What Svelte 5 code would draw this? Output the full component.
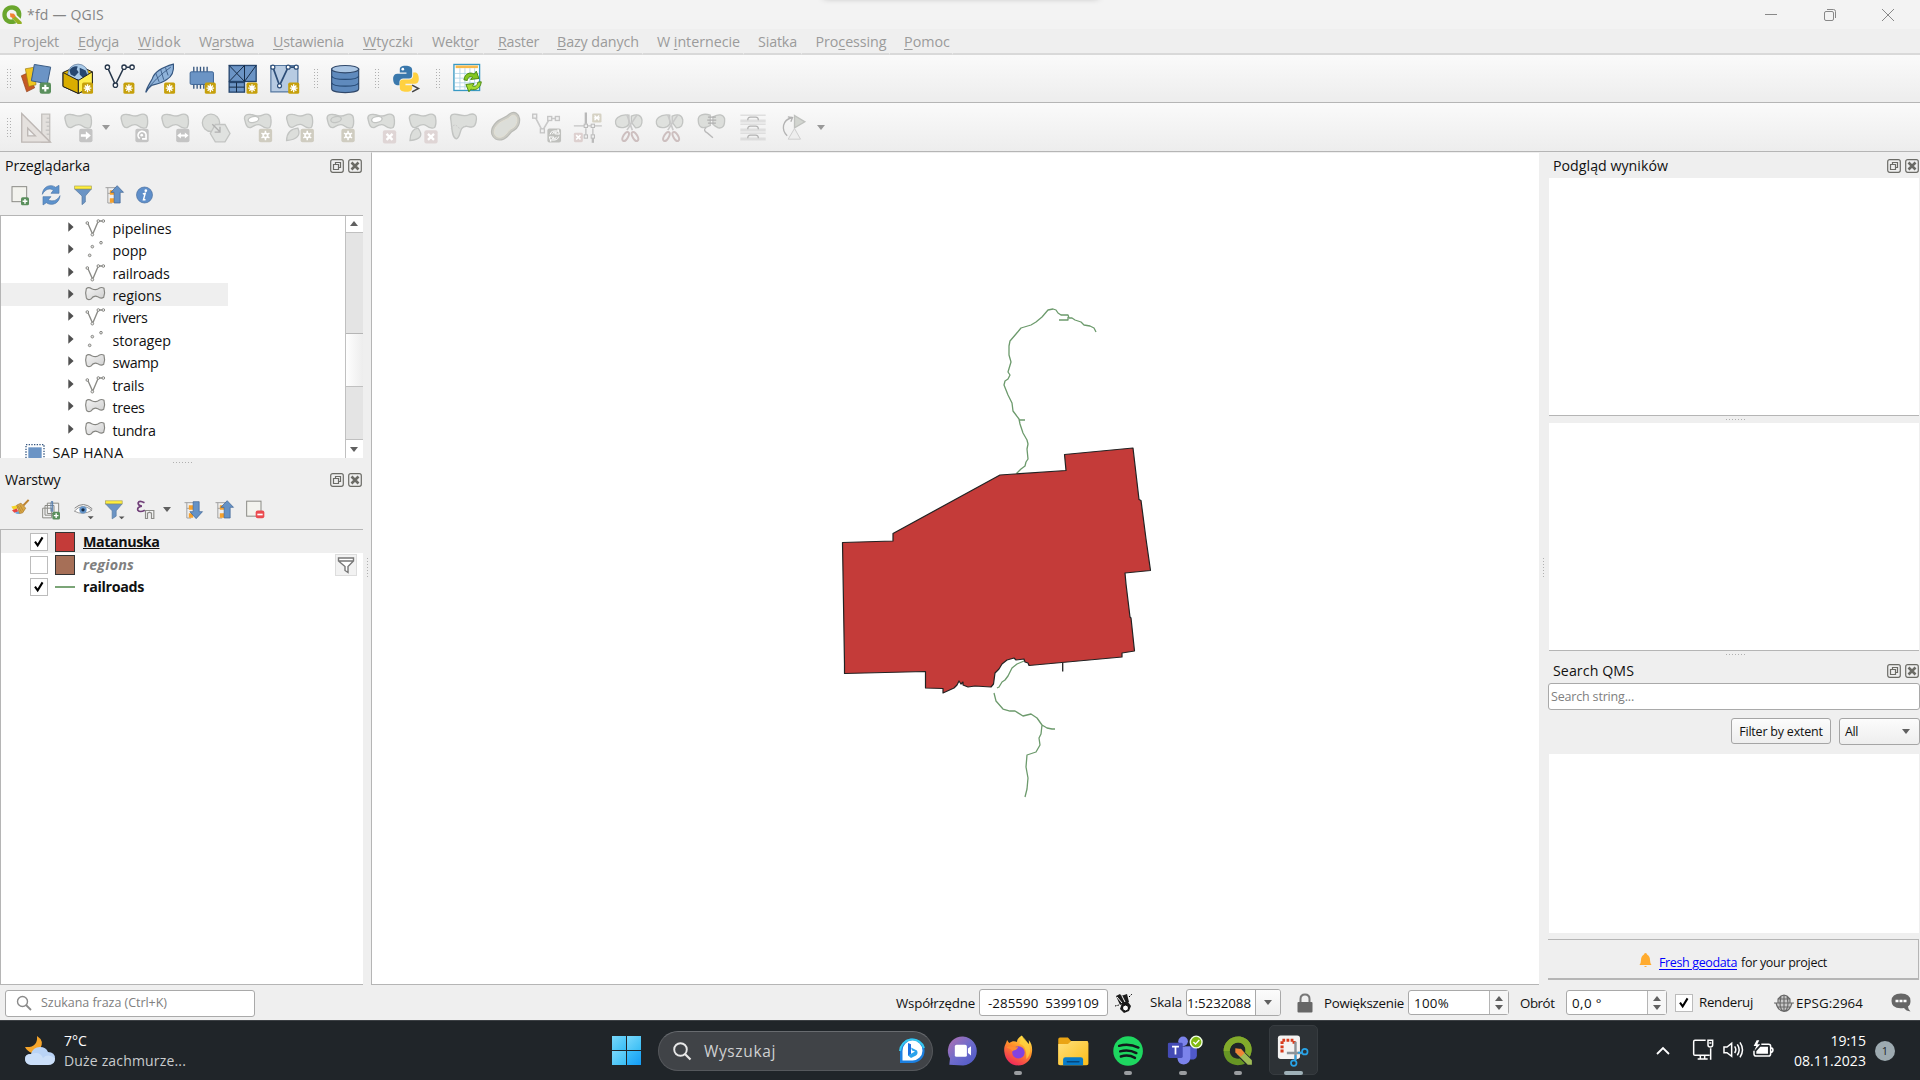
<script>
  function fit(node, width) {
    if (!width) return;
    const natural = node.getBoundingClientRect().width;
    node.style.letterSpacing = `${(width - natural) / node.textContent.length}px`;
  }

  // Icons are drawn on a shared sheet at three units per pixel.
  const vb = (cx, cy, s) => `${cx * 3 - s * 1.5} ${cy * 3 - s * 1.5} ${s * 3} ${s * 3}`;

  function place(names, start, pitch, extra) {
    let x = start;
    return names.map((name) => {
      const w = extra[name] ?? pitch;
      const item = { name, w, cx: x + w / 2 };
      x += w;
      return item;
    });
  }

  const menus = [
    ['Pro', 'j', 'ekt', 46, 64], ['', 'E', 'dycja', 41, 60], ['', 'W', 'idok', 43, 61],
    ['W', 'a', 'rstwa', 55, 74], ['', 'U', 'stawienia', 71, 90], ['', 'W', 'tyczki', 50, 69],
    ['Wekt', 'o', 'r', 47, 66], ['', 'R', 'aster', 41, 59], ['', 'B', 'azy danych', 82, 100],
    ['W ', 'i', 'nternecie', 83, 101], ['Siatka', '', '', 39, 57.5], ['Pro', 'c', 'essing', 71, 88.5],
    ['', 'P', 'omoc', 46, 62.5]
  ];

  const bar1 = place(
    ['source', 'gpkg', 'shape', 'feather', 'memory', 'mesh', 'virtual', 'grip', 'db', 'grip', 'python', 'grip', 'table'],
    16.35, 41.3, { grip: 19.9 });
  const bar2 = place(
    ['measure', 'move', 'drop', 'rotate', 'scale', 'simplify', 'ring', 'part', 'fillring', 'delring', 'delpart', 'reshape', 'offset', 'nodes', 'cross', 'split', 'splitp', 'merge', 'lines', 'turn', 'drop'],
    16.35, 41.2, { drop: 14.6 });

  const tree = [
    ['line', 'pipelines', 59], ['point', 'popp', 34.5], ['line', 'railroads', 57], ['poly', 'regions', 49],
    ['line', 'rivers', 35], ['point', 'storagep', 58.5], ['poly', 'swamp', 46], ['line', 'trails', 31.5],
    ['poly', 'trees', 32], ['poly', 'tundra', 43]
  ];
  const blob = 'M3 20C-1 7 9 2 21 4C35 6 44 13 56 6C68 0 80 3 81 15C83 28 82 36 78 43C68 48 61 44 52 37C42 29 30 38 21 43C9 46 6 33 3 20Z';
  const tasks = place(['chat', 'firefox', 'folder', 'spotify', 'teams', 'qgis', 'snip'], 935, 55.1, {});
</script>

{#snippet txt(s, w)}<span class="t" use:fit={w}>{s}</span>{/snippet}

{#snippet star(x, y)}
  <rect x={x} y={y} width="33" height="34" rx="5" fill="#c6a00b" />
  <path d="M{x + 16.5} {y + 5}v24M{x + 5} {y + 17}h23M{x + 8.5} {y + 9}l16 16M{x + 24.5} {y + 9}l-16 16" stroke="#fff" stroke-width="4" />
{/snippet}
{#snippet plus(x, y, s)}
  <rect x={x} y={y} width={s} height={s} rx={s / 5} fill="#5a8f5c" />
  <path d="M{x + s / 2} {y + s * 0.2}v{s * 0.6}M{x + s * 0.2} {y + s / 2}h{s * 0.6}" stroke="#fff" stroke-width={s / 5.5} />
{/snippet}
{#snippet gbadge(x, y, kind)}
  <rect x={x} y={y} width="40" height="40" rx="6" fill={kind === 'x' ? '#dfd5d5' : kind === 's' ? '#cfccc0' : '#c4c4c4'} />
  {#if kind === 's'}
    <path d="M{x + 20} {y + 6}v28M{x + 8} {y + 13}l24 14M{x + 32} {y + 13}l-24 14" stroke="#fff" stroke-width="4.500" />
    <circle cx={x + 20} cy={y + 20} r="9" fill="#fff" /><circle cx={x + 20} cy={y + 20} r="4" fill="#cfccc0" />
  {:else if kind === 'x'}
    <path d="M{x + 11} {y + 11}l18 18M{x + 29} {y + 11}l-18 18" stroke="#fff" stroke-width="7" />
  {:else if kind === 'r'}
    <path d="M{x + 5} {y + 16}h15v-9l15 13l-15 13v-9h-15z" fill="#fff" />
  {:else if kind === 'o'}
    <path d="M{x + 13} {y + 29}a12 12 0 1 1 17 -3M{x + 32} {y + 18}v12h-12" fill="none" stroke="#fff" stroke-width="5" />
    <circle cx={x + 19} cy={y + 19} r="4" fill="#fff" />
  {:else}
    <path d="M{x + 3} {y + 20}l11-9v6h12v-6l11 9l-11 9v-6h-12v6z" fill="#fff" />
  {/if}
{/snippet}
{#snippet shape(x, y, s, ring)}
  <g transform="translate({x} {y}) scale({s})">
    <path d={blob} fill="#dcdedb" stroke="#c2c4c2" stroke-width="4" />
    {#if ring}<ellipse cx="29" cy="19" rx="16" ry="9" fill={ring} stroke="#c2c4c2" stroke-width="4" transform="rotate(-12 29 19)" />{/if}
  </g>
{/snippet}
{#snippet qlogo()}
  <path d="M36 13C18 13 7 26 7 41C7 57 19 69 35 69C41 69 45 68 49 66L39 55C27 57 20 50 20 41C20 32 27 26 35 26C45 26 51 33 50 42L62 53C70 32 57 13 36 13Z" fill="#6aa62d" />
  <path d="M42 42L65 63V69H53L36 52Z" fill="#93b023" /><path d="M30 37L42 38L47 46L40 52L31 48Z" fill="#f18132" />
{/snippet}

{#snippet icon(n)}
  {#if n === 'source'}
    <path d="M64 228L84 219L104 264L80 276Z" fill="#c65a24" stroke="#8f3d16" stroke-width="2" />
    <path d="M76 207L104 202L108 255L86 260Z" fill="#f0c620" stroke="#9a7a10" stroke-width="2" />
    <path d="M103 194L152 202L142 252L94 243Z" fill="#6b94c5" stroke="#3a5c85" stroke-width="3" />
    {@render plus(119, 248, 34)}
  {:else if n === 'gpkg'}
    <path d="M190 218L236 197L278 216V260L236 281L190 260Z" fill="#e2b600" stroke="#222" stroke-width="3" />
    <circle cx="235" cy="224" r="31" fill="#a9cae8" stroke="#4b6a90" stroke-width="2" />
    <path d="M209 212q10-15 25-12l-3 9 6 8-12 13-12-6zM240 204l18 8 6 16-12 8-12-12zM224 236l14 3-4 8z" fill="#26466f" />
    <path d="M190 218L236 242V281L190 260Z" fill="#d9ad00" stroke="#222" stroke-width="3" stroke-linejoin="round" />
    <path d="M278 216L236 242V281L278 260Z" fill="#ffed4e" stroke="#222" stroke-width="3" stroke-linejoin="round" />
    {@render star(247, 248)}
  {:else if n === 'shape'}
    <path d="M321 202L345 255L371 202H395" fill="none" stroke="#26364a" stroke-width="4.5" />
    {#each [[321, 202], [345, 256], [371, 202], [395, 202]] as [x, y]}<circle cx={x} cy={y} r="6.500" fill="#fff" stroke="#26364a" stroke-width="4" />{/each}
    {@render star(369, 248)}
  {:else if n === 'feather'}
    <path d="M437 278C440 262 450 250 457 236C463 216 488 202 520 193C522 214 516 230 500 239C486 250 469 253 456 256C446 264 440 271 437 278Z" fill="#8fb3da" stroke="#35567f" stroke-width="3.500" />
    <path d="M438 274Q464 236 512 202M467 220l10 26M482 210l9 30M496 203l8 24" stroke="#35567f" stroke-width="2.5" fill="none" />
    {@render star(492, 248)}
  {:else if n === 'memory'}
    <path d="M582 201v66M592 201v66M602 201v66M612 201v66M622 201v66" stroke="#35567f" stroke-width="4" />
    <rect x="571" y="216" width="70" height="38" rx="4" fill="#6b94c5" stroke="#3f6696" stroke-width="3" />
    {@render star(615, 248)}
  {:else if n === 'mesh'}
    <rect x="689" y="197" width="81" height="48" fill="#6b94c5" stroke="#26466f" stroke-width="4" />
    <path d="M689 197L735 245M735 197L689 245M735 197V245M770 197L735 245" stroke="#172c47" stroke-width="3" />
    <rect x="689" y="248" width="46" height="29" fill="#6b94c5" stroke="#26466f" stroke-width="4" /><path d="M711 248v29M689 262h46" stroke="#172c47" stroke-width="3" />
    {@render star(741, 248)}
  {:else if n === 'virtual'}
    <path d="M812 197H893V276H812Z" fill="#b7cbe2" stroke="#54779f" stroke-width="3.500" />
    <path d="M818 202L838 257L864 202H888" fill="none" stroke="#2d4e78" stroke-width="5" />
    {#each [[818, 202], [838, 258], [864, 202], [888, 202]] as [x, y]}<circle cx={x} cy={y} r="6" fill="#fff" stroke="#2d4e78" stroke-width="3.500" />{/each}
    {@render star(864, 248)}
  {:else if n === 'db'}
    <path d="M995 208V267C995 282 1076 282 1076 267V208Z" fill="#5f8abd" stroke="#30486a" stroke-width="3.500" />
    <path d="M995 229C999 242 1072 242 1076 229M995 249C999 262 1072 262 1076 249" fill="none" stroke="#274a75" stroke-width="3.500" />
    <ellipse cx="1035.500" cy="208" rx="40.500" ry="11" fill="#aac5e3" stroke="#30486a" stroke-width="3.500" />
  {:else if n === 'python'}
    <path d="M1218 198C1202 198 1200 204 1200 210V218H1220V222H1192C1182 222 1180 232 1180 237C1180 248 1184 256 1192 256H1199V246C1199 240 1204 236 1210 236H1228C1234 236 1237 232 1237 226V210C1237 201 1228 198 1218 198Z" fill="#3a78ac" />
    <path d="M1219 276C1235 276 1237 270 1237 264V256H1217V252H1246C1255 252 1257 243 1257 237C1257 226 1253 218 1246 218H1240V228C1240 235 1234 239 1228 239H1210C1204 239 1200 243 1200 248V264C1200 273 1209 276 1219 276Z" fill="#ffd140" />
    <circle cx="1209" cy="208" r="4" fill="#fff" /><path d="M1237 256L1256 266L1237 276" fill="none" stroke="#444" stroke-width="4.500" />
  {:else if n === 'table'}
    <rect x="1363" y="194" width="77" height="78" fill="#fff" stroke="#3899c4" stroke-width="4" />
    <path d="M1368 201h67" stroke="#f8ba4b" stroke-width="8" /><path d="M1366 221h71M1366 235h71M1366 249h71M1366 261h71M1381 205v65M1396 205v65M1411 205v65M1425 205v65" stroke="#afd4e7" stroke-width="2.500" />
    <path d="M1393 240C1396 220 1412 216 1424 223L1430 214L1438 236L1413 239L1419 232C1410 228 1405 233 1403 242Z" fill="#84c722" stroke="#4b8b14" stroke-width="3" />
    <path d="M1445 246C1443 267 1426 273 1414 268L1408 276L1399 254L1423 251L1419 259C1427 262 1433 257 1435 247Z" fill="#a3db2e" stroke="#4b8b14" stroke-width="3" />
  {:else if n === 'measure'}
    <path d="M125 344h24v84h-24z" fill="#e3e0dd" stroke="#c4c1be" stroke-width="4" /><path d="M149 356h-9M149 368h-12M149 380h-9M149 392h-12M149 404h-9" stroke="#bbb" stroke-width="3" />
    <path d="M65 342L151 428H65ZM83 386V409H106Z" fill="#e5e1de" stroke="#bdb7b4" stroke-width="4" fill-rule="evenodd" />
  {:else if n === 'move'}{@render shape(193, 341, 1)}{@render gbadge(238, 388, 'r')}
  {:else if n === 'rotate'}{@render shape(361, 341, 1)}{@render gbadge(406, 388, 'o')}
  {:else if n === 'scale'}{@render shape(484, 341, 1)}{@render gbadge(529, 388, 'w')}
  {:else if n === 'simplify'}
    <circle cx="634" cy="370" r="26" fill="#dcdedb" stroke="#c2c4c2" stroke-width="4" /><path d="M647 375H676L691 402L676 427H647L632 402Z" fill="#e0e2e0" stroke="#c2c4c2" stroke-width="4" />
    <path d="M638 374L660 396M661 382V398H645" stroke="#b0b0b0" stroke-width="4" fill="none" />
  {:else if n === 'ring'}{@render shape(733, 341, 1, '#fff')}{@render gbadge(778, 388, 's')}
  {:else if n === 'part'}{@render shape(857, 341, 0.98)}<path d="M859 423Q860 389 893 386Q907 418 859 423Z" fill="#dcdedb" stroke="#c2c4c2" stroke-width="4" />{@render gbadge(901, 388, 's')}
  {:else if n === 'fillring'}{@render shape(979, 341, 1, '#d9dbd8')}{@render gbadge(1024, 388, 's')}
  {:else if n === 'delring'}{@render shape(1102, 341, 1, '#fff')}{@render gbadge(1149, 392, 'x')}
  {:else if n === 'delpart'}{@render shape(1227, 341, 1)}<path d="M1231 423Q1232 389 1255 386Q1280 418 1231 423Z" fill="#dcdedb" stroke="#c2c4c2" stroke-width="4" />{@render gbadge(1274, 392, 'x')}
  {:else if n === 'reshape'}
    <path d="M1354 360C1350 344 1362 342 1374 345C1392 350 1400 351 1410 345C1424 340 1433 348 1431 358C1430 376 1424 384 1414 383C1404 380 1394 378 1388 386C1380 396 1382 414 1371 418C1356 414 1358 384 1354 360Z" fill="#dcdedb" stroke="#c2c4c2" stroke-width="4" />
    <path d="M1355 386q10-16 20-4t22-4q14 8 30 0" stroke="#c8c8c8" stroke-dasharray="5 4" stroke-width="3" fill="none" />
  {:else if n === 'offset'}
    <path d="M1532 350C1522 362 1506 362 1494 374C1472 396 1484 416 1502 413C1520 409 1520 393 1536 386C1558 375 1552 336 1532 350Z" fill="none" stroke="#b9bab5" stroke-width="20" stroke-linejoin="round" />
    <path d="M1532 350C1522 362 1506 362 1494 374C1472 396 1484 416 1502 413C1520 409 1520 393 1536 386C1558 375 1552 336 1532 350Z" fill="#dcded9" stroke="#cbcbc4" stroke-width="13" stroke-linejoin="round" />
    <path d="M1532 350C1522 362 1506 362 1494 374C1472 396 1484 416 1502 413C1520 409 1520 393 1536 386C1558 375 1552 336 1532 350Z" fill="#dcded9" stroke="#e4e1d5" stroke-width="3" stroke-linejoin="round" />
  {:else if n === 'nodes'}
    <path d="M1604 350L1627 394L1649 357H1674" fill="none" stroke="#c9c9c9" stroke-width="5" />
    {#each [[1604, 350], [1627, 394], [1649, 357], [1672, 357]] as [x, y]}<rect x={x - 6} y={y - 6} width="12" height="12" fill="#f1f1f1" stroke="#c5c5c5" stroke-width="4" />{/each}
    <rect x="1642" y="387" width="41" height="42" rx="6" fill="#bfc0bd" /><path d="M1650 405q3-14 24-10v-5l4 14-14-1 5-5q-10-3-12 6M1676 411q-3 14-24 10v5l-4-14 14 1-5 5q10 3 12-6" stroke="#fff" stroke-width="3" fill="none" />
  {:else if n === 'cross'}
    <path d="M1722 379h84" stroke="#d0d0d0" stroke-width="5" /><path d="M1758 339v34" stroke="#b9b9b9" stroke-width="7" /><path d="M1758 386v20M1779 386v20" stroke="#ccc" stroke-width="5" /><path d="M1779 414v16" stroke="#bbb" stroke-width="7" />
    {#each [[1758, 379], [1779, 379], [1758, 411], [1779, 411]] as [x, y]}<rect x={x - 5} y={y - 5} width="10" height="10" fill="#eee" stroke="#bbb" stroke-width="3" />{/each}
    <rect x="1777" y="342" width="28" height="27" rx="4" fill="#d6d2c4" /><path d="M1784 348l14 14M1798 348l-14 14M1782 355h18" stroke="#fff" stroke-width="4" />
    <rect x="1722" y="400" width="27" height="28" rx="4" fill="#ddd0cf" /><path d="M1729 407l13 13M1742 407l-13 13" stroke="#fff" stroke-width="5" />
  {:else if n === 'split' || n === 'splitp'}
    <g transform="translate({n === 'splitp' ? 123 : 0} 0)">
      <path d="M1852 380C1838 360 1860 342 1888 347V374C1881 386 1862 387 1852 380ZM1895 350Q1922 338 1927 361Q1929 385 1908 385L1895 368Z" fill="#dfe1de" stroke="#c2c4c2" stroke-width="4" />
      <path d="M1882 346L1898 392M1912 346L1882 392" stroke="#c9c9c9" stroke-width="5" />
      <ellipse cx="1878" cy="411" rx="7" ry="15" transform="rotate(30 1878 411)" fill="none" stroke="#cdbfbf" stroke-width="6" /><ellipse cx="1906" cy="411" rx="7" ry="15" transform="rotate(-30 1906 411)" fill="none" stroke="#cdbfbf" stroke-width="6" />
    </g>
  {:else if n === 'merge'}
    <path d="M2094 363C2092 345 2112 341 2130 347V378C2104 392 2095 382 2094 363ZM2138 352Q2166 338 2173 357Q2175 389 2154 385Q2144 380 2138 374Z" fill="#dcdedb" stroke="#c2c4c2" stroke-width="4" />
    <path d="M2123 353h24M2121 362h27M2123 371h24" stroke="#b0b0b0" stroke-width="4" /><path d="M2118 384q-12 8 4 17l16 14" stroke="#b9b9b9" stroke-width="4" fill="none" />
  {:else if n === 'lines'}
    {#each [347, 374, 401] as y}<path d="M2221 {y}h76M2221 {y + 15}h76M2221 {y + 20}h76" stroke="#d4d4d4" stroke-width="3" /><path d="M2243 {y + 15}q0-9 8-9h16q8 0 8 9M2251 {y + 6}h16" stroke="#b2b2b2" stroke-width="3.500" fill="none" />{/each}
  {:else if n === 'turn'}
    <path d="M2362 409C2344 391 2346 362 2377 354M2364 352l14 2-5 13" stroke="#b3b3b3" stroke-width="4" fill="none" /><path d="M2384 348L2415 367L2384 385Z" fill="#d2d5d0" stroke="#bfc1be" stroke-width="4" /><path d="M2384 387L2402 419H2365Z" fill="#eee" stroke="#cecece" stroke-width="3" />
  {:else if n === 'add'}
    <rect x="36" y="560" width="44" height="45" fill="#f3f3ee" stroke="#8b8b86" stroke-width="3" />{@render plus(63, 592, 24)}
  {:else if n === 'refresh'}
    <path d="M127 583C128 560 151 550 167 562L177 556V580H153L160 571C150 563 136 567 127 583Z" fill="#5d92cc" stroke="#5079aa" stroke-width="2" /><path d="M180 587C178 610 156 620 139 608L129 615V590H153L145 599C156 606 171 603 180 587Z" fill="#5d92cc" stroke="#5079aa" stroke-width="2" />
  {:else if n === 'filter'}
    <path d="M224 567H274L256 588V606L246 614V588Z" fill="#6b94c5" stroke="#54779f" stroke-width="2" /><rect x="224" y="558" width="50" height="9" fill="#ffef3c" stroke="#a69f55" stroke-width="2" />
  {:else if n === 'up'}
    <path d="M318 563h32M325 563v46h13M325 580h10" stroke="#a0a0a0" stroke-width="3" fill="none" /><path d="M331 571h13v13h-13zM331 595h13v13h-13z" fill="#f6a12d" /><path d="M353 557L372 577H362V609H344V577H334Z" fill="#6592c6" stroke="#395f91" stroke-width="2" />
  {:else if n === 'down'}
    <path d="M318 563h32M325 563v46h13M325 580h10" stroke="#a0a0a0" stroke-width="3" fill="none" /><path d="M331 571h13v13h-13zM331 595h13v13h-13z" fill="#f6a12d" /><path d="M353 611L372 590H362V560H344V590H334Z" fill="#6592c6" stroke="#395f91" stroke-width="2" />
  {:else if n === 'info'}
    <circle cx="435" cy="585" r="24" fill="#5f8fca" stroke="#4b6f9e" stroke-width="2" /><circle cx="439" cy="572" r="4" fill="#fff" /><path d="M430 582l7-2-5 19h6" fill="none" stroke="#fff" stroke-width="4.500" />
  {:else if n === 'brush'}
    <path d="M34 1518l18-4 2 10-14 4z" fill="#f4d529" /><path d="M36 1529l14-5 5 9-12 4z" fill="#e74543" /><path d="M44 1537l12-5 4 8q-8 2-16-3z" fill="#69a5df" /><path d="M50 1514l13-6 14 15-9 14-9 2z" fill="#d8a645" stroke="#a47223" stroke-width="2" /><path d="M55 1517l9 17M60 1514l9 16" stroke="#a47223" stroke-width="1.500" /><path d="M70 1515L86 1498" stroke="#bd8432" stroke-width="6" />
  {:else if n === 'group'}
    <path d="M128 1523h27v29h-27zM135 1515h27v29h-27zM142 1508h34v31h-34z" fill="#f3f3f3" stroke="#8a8a85" stroke-width="3" /><path d="M153 1533v-24q0-9 5-6v31" stroke="#517caf" stroke-width="3" fill="none" />{@render plus(157, 1534, 23)}
  {:else if n === 'eye'}
    <path d="M223 1532Q245 1506 276 1529Q249 1546 223 1532Z" fill="#fff" stroke="#888" stroke-width="2.500" /><circle cx="249" cy="1528" r="11" fill="#6595c9" /><circle cx="249" cy="1528" r="5" fill="#172a42" /><path d="M224 1523Q250 1500 277 1525" fill="none" stroke="#888" stroke-width="3" /><path d="M263 1547h18l-9 9z" fill="#555" />
  {:else if n === 'filter2'}
    <path d="M318 1510H368L350 1531V1547L338 1555V1531Z" fill="#6b94c5" stroke="#54779f" stroke-width="2" /><rect x="318" y="1501" width="50" height="9" fill="#ffef3c" stroke="#a69f55" stroke-width="2" /><path d="M358 1548h17l-8.500 8z" fill="#555" />
  {:else if n === 'eps'}
    <path d="M435 1507Q419 1498 416 1507Q415 1515 427 1517Q412 1520 415 1529Q421 1537 436 1529" fill="none" stroke="#703f78" stroke-width="5" /><path d="M438 1530h25v24h-7v-16l-6-3-6 3v16h-6z" fill="#f4f4f4" stroke="#8c8c88" stroke-width="3.500" />
  {:else if n === 'remove'}
    <rect x="737" y="1502" width="43" height="45" fill="#f3f3ee" stroke="#8b8b86" stroke-width="3" /><rect x="764" y="1530" width="26" height="23" rx="6" fill="#eb4b50" /><path d="M769 1542h16" stroke="#fff" stroke-width="5" />
  {:else if n === 'chat'}
    <path d="M200 250L202 232A42 42 0 1 1 240 252Z" fill="url(#chatg)" /><rect x="216" y="192" width="35" height="35" rx="5" fill="#fff" /><path d="M254 203l9-7v27l-9-7z" fill="#fff" />
  {:else if n === 'firefox'}
    <path d="M360 212C358 195 366 188 368 178C371 183 373 185 375 187C382 181 390 181 397 184C396 176 403 170 411 165C414 175 424 182 431 190C432 185 431 181 431 178C440 188 442 203 440 214C438 237 420 252 400 252C378 252 362 235 360 212Z" fill="url(#foxg)" />
    <circle cx="401" cy="214" r="18" fill="#8243df" /><path d="M367 199C379 191 389 202 400 198C396 210 388 207 384 211C378 202 373 204 367 199Z" fill="#ff8d32" /><path d="M411 166C438 192 442 216 424 234C425 209 419 192 404 190Z" fill="#ffd63f" opacity=".7" />
  {:else if n === 'folder'}
    <path d="M517 249V176Q517 171 522 171H545L554 181H598Q604 181 604 187V249Z" fill="#eaa414" /><path d="M517 190H545L555 181H600Q604 181 604 187V246Q604 251 599 251H522Q517 251 517 246Z" fill="url(#foldg)" /><path d="M531 251V235Q531 228 538 228H582Q589 228 589 235V251Z" fill="#087bc8" /><rect x="541" y="239" width="38" height="4" rx="2" fill="#05477c" />
  {:else if n === 'spotify'}
    <circle cx="720" cy="210" r="43" fill="#1ed760" /><path d="M694 195Q723 187 750 200M697 211Q722 204 744 216M699 226Q721 219 740 230" stroke="#12191c" stroke-width="7" stroke-linecap="round" fill="none" />
  {:else if n === 'teams'}
    <circle cx="880" cy="182" r="14" fill="#7b83eb" /><circle cx="909" cy="186" r="10" fill="#5059c9" /><path d="M886 197H920V223Q920 235 904 235H886Z" fill="#5059c9" /><path d="M860 197H901V229Q901 248 882 249Q866 248 864 234Z" fill="#7b83eb" /><rect x="836" y="186" width="43" height="44" rx="4" fill="#444bb5" />
    <path d="M848 197h20M858 197v23" stroke="#fff" stroke-width="5" /><circle cx="918" cy="184" r="17" fill="#82ba12" stroke="#f2ffe7" stroke-width="4" /><path d="M910 184l6 6 11-12" stroke="#fff" stroke-width="4" fill="none" />
  {:else if n === 'qgis'}
    <path d="M1041 168C1015 168 998 188 998 210C998 234 1016 251 1039 251C1047 251 1055 249 1060 246L1045 232C1028 234 1016 224 1016 210C1016 196 1027 185 1040 185C1055 185 1064 198 1061 214L1074 227C1090 195 1068 168 1041 168Z" fill="#669524" /><path d="M1041 168C1015 168 998 188 998 210H1016C1016 196 1027 185 1040 185C1055 185 1064 198 1061 214L1074 227C1090 195 1068 168 1041 168Z" fill="#82aa2b" /><path d="M1046 203L1080 237V250H1068L1036 218Z" fill="#9fbc56" /><path d="M1032 202L1049 204L1059 216L1048 227L1032 214Z" fill="#ee8537" />
  {:else if n === 'snip'}
    <rect x="1156" y="165" width="64" height="68" rx="8" fill="#f4f3f2" /><path d="M1168 214V179H1203V190" fill="none" stroke="#d83b1c" stroke-width="9" stroke-dasharray="8 4" /><path d="M1182 216H1225M1207 183V236" stroke="#8c9499" stroke-width="7" /><circle cx="1234" cy="212" r="8" fill="none" stroke="#28a4e8" stroke-width="5" /><circle cx="1202" cy="245" r="8" fill="none" stroke="#28a4e8" stroke-width="5" /><path d="M1207 236V222M1226 215H1214" stroke="#28a4e8" stroke-width="5" />
  {/if}
{/snippet}

{#snippet bar(items, cy)}
  {#each items as it}
    <div class="slot" style:width="{it.w}px">
      {#if it.name === 'grip'}<i class="grip"></i>
      {:else if it.name === 'drop'}<i class="tri"></i>
      {:else}<svg class="i30" viewBox={vb(it.cx, cy, 30)}>{@render icon(it.name)}</svg>{/if}
    </div>
  {/each}
{/snippet}
{#snippet small(n, cx, cy)}<svg class="i20" viewBox={vb(cx, cy, 20)}>{@render icon(n)}</svg>{/snippet}
{#snippet dockbtns()}
  <div class="dock">
    <svg viewBox="0 0 14 14"><rect x=".7" y=".7" width="12.600" height="12.600" rx="2" /><path d="M5.500 5V3.500h5v5H9M3.500 5.500h5v5h-5z" /></svg>
    <svg viewBox="0 0 14 14"><rect x=".7" y=".7" width="12.600" height="12.600" rx="2" /><path d="M3.500 3.500l7 7M10.500 3.500l-7 7" stroke-width="2.600" /></svg>
  </div>
{/snippet}
{#snippet check(on)}<div class="check">{#if on}<svg viewBox="0 0 18 18"><path d="M4.500 8.500L7.500 12.800L13 3.800" fill="none" stroke="#000" stroke-width="2.300" /></svg>{/if}</div>{/snippet}
{#snippet spin()}<div class="spin"><i class="utri"></i><i class="tri"></i></div>{/snippet}

<div class="app">
  <svg class="defs" width="0" height="0">
    <defs>
      <linearGradient id="chatg" x1="0" y1="0" x2="1" y2="1"><stop offset="0" stop-color="#b46fae" /><stop offset=".5" stop-color="#6f6ccc" /><stop offset="1" stop-color="#4b57c6" /></linearGradient>
      <linearGradient id="foxg" x1=".8" y1="0" x2=".3" y2="1"><stop offset="0" stop-color="#fff14c" /><stop offset=".45" stop-color="#ff9028" /><stop offset="1" stop-color="#f0245c" /></linearGradient>
      <linearGradient id="foldg" x1="0" y1="0" x2="1" y2="1"><stop offset="0" stop-color="#ffe07c" /><stop offset="1" stop-color="#fbbd18" /></linearGradient>
      <linearGradient id="polyg" x1="0" y1="0" x2="1" y2="1"><stop offset="0" stop-color="#f4f4f4" /><stop offset="1" stop-color="#cfcfcf" /></linearGradient>
    </defs>
  </svg>

  <header class="title">
    <svg class="logo" viewBox="6 12 60 60">{@render qlogo()}</svg>
    {@render txt('*fd — QGIS', 77)}
    <i class="flyout"></i>
    <div class="winbtns">
      <svg viewBox="0 0 14 14"><path d="M1 6.500h12" /></svg>
      <svg viewBox="0 0 14 14"><rect x="1.500" y="3.500" width="9" height="9" rx="1.500" /><path d="M4 1.500h6.500q2 0 2 2V10" /></svg>
      <svg viewBox="0 0 14 14"><path d="M1 1l12 12M13 1L1 13" /></svg>
    </div>
  </header>

  <nav class="menu">
    {#each menus as [a, u, b, w, slot]}
      <div class="mi" style:width="{slot}px"><span class="t" use:fit={w}>{a}{#if u}<u>{u}</u>{/if}{b}</span></div>
    {/each}
    <div class="mrest"></div>
  </nav>

  <div class="toolbar first"><div class="lead"><i class="grip"></i></div>{@render bar(bar1, 79.2)}</div>
  <div class="toolbar"><div class="lead"><i class="grip"></i></div>{@render bar(bar2, 127.500)}</div>

  <main>
    <aside class="left">
      <div class="phead">{@render txt('Przeglądarka', 85)}{@render dockbtns()}</div>
      <div class="ptools a">
        {@render small('add', 20, 195)}{@render small('refresh', 51, 195)}{@render small('filter', 83, 195)}{@render small('up', 114.500, 195)}{@render small('info', 145.500, 195)}
      </div>
      <div class="browser">
        <div class="list">
          {#each tree as [kind, name, w]}
            <div class="row" class:hot={name === 'regions'}>
              <svg class="exp" viewBox="0 0 6 10"><path d="M.3 .3L5.600 5L.3 9.700z" fill="#505050" /></svg>
              <svg class="ti" viewBox="0 0 60 54">
                {#if kind === 'line'}
                  <path d="M8 12L23 46L40 6H56" fill="none" stroke="#8a8a86" stroke-width="4" />
                  {#each [[7, 12], [22, 47], [40, 6], [55, 6]] as [x, y]}<circle cx={x} cy={y} r="4" fill="#eee" stroke="#8a8a86" stroke-width="3" />{/each}
                {:else if kind === 'point'}
                  {#each [[22, 17], [48, 5], [14, 43]] as [x, y]}<circle cx={x} cy={y} r="4" fill="#ddd" stroke="#8a8a86" stroke-width="3" />{/each}
                {:else}
                  <path d="M4 8Q10 2 20 8Q34 14 42 7Q50 2 57 7Q61 20 56 34Q48 40 38 32Q26 27 18 39Q8 44 4 35Q0 20 4 8Z" fill="url(#polyg)" stroke="#858581" stroke-width="3.500" />
                {/if}
              </svg>
              {@render txt(name, w)}
            </div>
          {/each}
          <div class="row sap">
            <svg class="ti" viewBox="0 0 60 54"><rect x="3" y="5" width="54" height="54" fill="none" stroke="#35567f" stroke-width="4" stroke-dasharray="4 4" /><rect x="10" y="13" width="40" height="42" fill="#6b94c5" /></svg>
            {@render txt('SAP HANA', 71)}
          </div>
        </div>
        <div class="scroll">
          <div class="sb up"><i class="utri"></i></div>
          <div class="g1"></div><div class="thumb"></div><div class="g2"></div>
          <div class="sb"><i class="tri"></i></div>
        </div>
      </div>
      <div class="hsplit"><i></i></div>
      <div class="phead w">{@render txt('Warstwy', 55.500)}{@render dockbtns()}</div>
      <div class="ptools b">
        {@render small('brush', 20, 509.500)}{@render small('group', 51, 509.500)}{@render small('eye', 83, 509.500)}{@render small('filter2', 114.500, 509.500)}{@render small('eps', 145.500, 509.500)}
        <i class="tri"></i>
        {@render small('down', 114.500, 195)}{@render small('up', 114.500, 195)}{@render small('remove', 254, 509.500)}
      </div>
      <div class="layers">
        <div class="layer hot">{@render check(true)}<i class="sw red"></i><u>{@render txt('Matanuska', 76.500)}</u></div>
        <div class="layer off">{@render check(false)}<i class="sw brown"></i>{@render txt('regions', 51)}
          <svg class="flt" viewBox="0 0 20 20"><path d="M2.500 3h15v3l-5.500 5.500v6l-3-2v-4L2.500 6zM3 6h14" fill="#fff" stroke="#777" stroke-width="1.400" /></svg>
        </div>
        <div class="layer">{@render check(true)}<i class="ln"></i>{@render txt('railroads', 61)}</div>
      </div>
    </aside>
    <div class="vsplit"><i></i></div>
    <section class="map">
      <svg viewBox="372 153 1167 831" width="1167" height="831">
        <g fill="none" stroke="#6c9a6c" stroke-width="1.300" stroke-linejoin="round">
          <path d="M1096 332L1094 328L1090 326L1084 325L1081 322L1075 320L1072 318L1069 318L1068 315L1061 315L1058 313L1056 310L1053 309L1048 310L1042 317L1036 322L1031 325L1021 328L1016 334L1010 341L1009 346L1009 355L1011 362L1008 372L1010 375L1008 379L1005 381L1004 385L1008 395L1012 403L1013 411L1019 419L1020 424L1023 433L1027 440L1028 444L1027 449L1028 459L1026 462L1025 466L1021 469L1016 474" />
          <path d="M1059 320H1068V317M1019 420H1025" />
          <path d="M1024 661L1017 664L1012 668L1008 676L1005 680L1002 682L999 687L997 688M994 693L996 701L1003 709L1010 711L1015 711L1023 716L1031 714L1037 718L1042 725L1047 728L1052 729H1055M1042 725L1041 734L1039 738L1040 745L1036 752L1027 755L1026 767L1028 778L1027 789L1025 797" />
        </g>
        <path d="M842.500 542.500L893 541V533.500L1000 475L1066 470.500L1064.500 454.500L1133 448L1139 499.500L1141 500.500L1146 539L1150.500 570.500L1125 573L1126 584L1130 617L1131 618L1134.500 651L1122 653V657L1029 665.500L1028 663L1025 662L1024 659L1016 660L1014 658L1007 660L1002 664L999 669L995 673L993.500 684L991 687L975 686L968 687L963 685L963 682L961 684L959 681L957 685L954 688L943 693V688.500L925.500 688V671.500L844.500 673.500V664Z" fill="#c43b39" stroke="#222" stroke-width="1.200" stroke-linejoin="round" />
        <path d="M1062.700 663V671.500" stroke="#222" stroke-width="1.300" />
      </svg>
    </section>
    <div class="vsplit right"><i></i></div>
    <aside class="rside">
      <div class="phead r">{@render txt('Podgląd wyników', 115)}{@render dockbtns()}</div>
      <div class="white w1"></div>
      <div class="hsplit x"><i></i></div>
      <div class="white w2"></div>
      <div class="hsplit y"><i></i></div>
      <div class="phead q">{@render txt('Search QMS', 81)}{@render dockbtns()}</div>
      <div class="field qms">{@render txt('Search string...', 83)}</div>
      <div class="qbtns">
        <div class="btn">{@render txt('Filter by extent', 83.500)}</div>
        <div class="btn combo">{@render txt('All', 13)}<i class="tri"></i></div>
      </div>
      <div class="white w3"></div>
      <div class="fresh">
        <svg viewBox="0 0 13 15"><path d="M6.500 0Q8 0 8 1.500Q11 3 11 7Q11 10 12.500 12H.5Q2 10 2 7Q2 3 5 1.500Q5 0 6.500 0ZM5 13h3q-1.500 2-3 0z" fill="#ffab2e" /></svg>
        <span class="lnk">{@render txt('Fresh geodata', 78)}</span>{@render txt('for your project', 86)}
      </div>
    </aside>
  </main>

  <footer class="status">
    <div class="field find"><svg viewBox="0 0 16 16"><circle cx="6.500" cy="6.500" r="5" fill="none" stroke="#8a8a8a" stroke-width="1.400" /><path d="M10 10l5 5" stroke="#8a8a8a" stroke-width="1.800" /></svg>{@render txt('Szukana fraza (Ctrl+K)', 126)}</div>
    <div class="s-coord">{@render txt('Współrzędne', 79)}</div>
    <div class="field coord">{@render txt('-285590  5399109', 111)}</div>
    <svg class="ext" viewBox="0 0 20 20"><path d="M2 3l4-2 6 8-6 3zM7 3l6-2 2 8-5 2zM8 10l6-1 3 4-2 5-5 2-4-4z" fill="#1c1c1c" /><circle cx="11.500" cy="15" r="3" fill="#fff" stroke="#000" /><path d="M3 4l5 6M8 3l3 6" stroke="#fff" /><path d="M15 4l3-3M1 13l4-1" stroke="#000" stroke-dasharray="1.500 1" /></svg>
    <div class="s-scale">{@render txt('Skala', 32)}</div>
    <div class="field scalef">{@render txt('1:5232088', 64)}<div class="cbtn"><i class="tri"></i></div></div>
    <svg class="lock" viewBox="0 0 16 20"><path d="M3.500 9V6q0-4.500 4.500-4.500T12.500 6v3" fill="none" stroke="#777" stroke-width="2" /><rect x=".5" y="9" width="15" height="10.500" rx="1" fill="#666" /></svg>
    <div class="s-mag">{@render txt('Powiększenie', 80)}</div>
    <div class="field spinf">{@render txt('100%', 35)}{@render spin()}</div>
    <div class="s-rot">{@render txt('Obrót', 34.500)}</div>
    <div class="field spinf">{@render txt('0,0 °', 30)}{@render spin()}</div>
    <div class="s-chk">{@render check(true)}</div>
    <div class="s-ren">{@render txt('Renderuj', 54)}</div>
    <svg class="globe" viewBox="0 0 20 18"><path d="M4 9V5l3-3 3-1 3 1 3 3v4zM0 9h20M2 9q2 8 8 8.500Q16 17 18 9M6 9q0 7 4 8.500Q14 16 14 9M10 1v16.500M4 5h12M3 13h14M7 2L6 9M13 2l1 7" fill="#c8c8c8" stroke="#666" stroke-width="1.100" /></svg>
    <div class="s-eps">{@render txt('EPSG:2964', 67)}</div>
    <svg class="msg" viewBox="0 0 20 19"><path d="M10 .5Q19.500 .5 19.500 8Q19.500 12 17 13.500Q17 16 19.500 18.500Q15 18 13 15Q.5 16.500 .5 8Q.5 .5 10 .5Z" fill="#666" /><path d="M4.500 8h3M8.500 8h3M12.500 8h3" stroke="#fff" stroke-width="2.600" /></svg>
  </footer>

  <div class="task">
    <svg class="wx" viewBox="0 0 30 30"><path d="M12 0Q20 5 15 13L7 17Q2 15 0 11Q13 12 12 0Z" fill="#f5a52b" /><path d="M6 29Q0 28 0 23Q0 18 6 18Q8 11 15 11Q21 11 23 16Q30 16 30 22.500Q30 29 23 29Z" fill="#b9d3f6" /><path d="M6 29Q0 28 0 23Q0 18 6 18Q15 15 18 22Q23 17 30 22.500Q30 29 23 29Z" fill="#d3e4fb" opacity=".7" /></svg>
    <div class="wtext"><b>{@render txt('7°C', 23)}</b>{@render txt('Duże zachmurze...', 122)}</div>
    <div class="win"><i></i><i></i><i></i><i></i></div>
    <div class="pill">
      <svg viewBox="0 0 18 18"><circle cx="7.500" cy="7.500" r="6.300" fill="none" stroke="#e8e8e8" stroke-width="1.900" /><path d="M12 12l5.500 5.500" stroke="#e8e8e8" stroke-width="2.200" /></svg>
      {@render txt('Wyszukaj', 72)}
      <svg class="bing" viewBox="0 0 26 26"><path d="M1 25V13A12.300 12.300 0 1 1 13 25Z" fill="#1b7fe0" /><path d="M1 13A12.300 12.300 0 0 1 25 10" stroke="#35c8ee" stroke-width="2" fill="none" /><path d="M3.500 22.500V13A10 10 0 1 1 13 22.500Z" fill="#fff" /><path d="M9 5l3 1.200V16l-3 2z" fill="#1b6fe0" /><path d="M9 17.500l7-4-3-1-1-3 6 3q1.500 3-1 5l-5 2.500z" fill="#2aa3ec" /></svg>
    </div>
    <div class="apps">
      {#each tasks as it}
        <div class="app1" class:open={['firefox', 'spotify', 'teams', 'qgis'].includes(it.name)} class:active={it.name === 'snip'}>
          <svg viewBox="{(it.cx - 880) * 2.904 - 58} 152 116 116">{@render icon(it.name)}</svg><i></i>
        </div>
      {/each}
    </div>
    <svg class="chev" viewBox="0 0 14 8"><path d="M1 7l6-6 6 6" fill="none" stroke="#fff" stroke-width="1.800" /></svg>
    <svg class="tray" viewBox="2275 175 250 75">
      <g fill="none" stroke="#fff" stroke-width="4.500">
        <path d="M2316 182H2284Q2280 182 2280 186V223Q2280 227 2284 227H2328M2292 238H2322M2300 227v10M2313 227v10M2331 206V240M2323 182h14v14q0 6-7 6t-7-6zM2327 190h6" />
        <path d="M2371 202h9l14-11v39l-14-11h-9zM2403 200q7 10 0 20M2411 194q11 16 0 33M2419 188q15 22 0 45" />
        <path d="M2483 194h22q6 0 6 6v22q0 7-6 7h-38q-6 0-6-7v-9M2511 204q7 0 7 7t-7 7" />
      </g>
      <path d="M2469 182l-9 17h8l-6 14 18-19h-9l6-12zM2480 201h23v21h-35v-7z" fill="#fff" />
    </svg>
    <div class="clock">{@render txt('19:15', 35.500)}{@render txt('08.11.2023', 72)}</div>
    <div class="note">1</div>
  </div>
</div>

<style>
  :global(body) { margin: 0; overflow: hidden; }
  .app { width: 1920px; height: 1080px; display: flex; flex-direction: column; background: #efefef; font: 14.3px/20px "Open Sans", "Noto Sans", sans-serif; color: #111; overflow: hidden; }
  .app :global(*) { box-sizing: border-box; }
  .defs { position: absolute; }
  svg { display: block; flex: none; overflow: visible; }
  .t { white-space: pre; flex: none; }
  i { display: block; flex: none; }

  .title { height: 29px; flex: none; background: #f3f3f3; display: flex; align-items: center; color: #858585; font-size: 14px; position: relative; }
  .logo { width: 20px; height: 20px; margin: 0 5px 0 2px; }
  .flyout { position: absolute; left: 823px; top: -10px; width: 276px; height: 8px; border-radius: 4px; box-shadow: 0 0 6px #aaa; }
  .winbtns { margin-left: auto; display: flex; gap: 44.5px; padding-right: 25px; }
  .winbtns svg { width: 14px; height: 14px; fill: none; stroke: #888; }

  .menu { height: 26px; flex: none; display: flex; color: #9b9b9b; }
  .mi { padding: 3px 0 0 14px; border-bottom: 2px solid #d9d9d9; border-right: 1px solid #efefef; flex: none; }
  .mi:first-child { padding-left: 13px; }
  .mi u { text-decoration-thickness: 1px; text-underline-offset: 2px; }
  .mrest { flex: 1; border-bottom: 2px solid #d9d9d9; }

  .toolbar { height: 49px; flex: none; display: flex; border-bottom: 1px solid #b5b5b5; background: linear-gradient(#fafafa, #ededed); }
  .toolbar.first { height: 48px; }
  .lead { width: 16.35px; flex: none; display: flex; align-items: center; padding-left: 6px; }
  .slot { flex: none; display: flex; align-items: center; justify-content: center; }
  .grip { width: 5px; height: 21px; background: radial-gradient(circle, #b0b0b0 .7px, transparent 1px) 0 0 / 3px 3px; }
  .i30 { width: 30px; height: 30px; }
  .i20 { width: 20px; height: 20px; }
  .tri { width: 0; height: 0; border: 4.5px solid transparent; border-top: 5px solid #606060; border-bottom: 0; }
  .utri { width: 0; height: 0; border: 4.5px solid transparent; border-bottom: 5px solid #606060; border-top: 0; }
  .toolbar .tri { border-top-color: #999; }

  main { height: 833px; flex: none; display: flex; }
  .left { width: 363px; flex: none; display: flex; flex-direction: column; }
  .phead { display: flex; align-items: center; justify-content: space-between; height: 26px; padding: 1px 1px 0 5px; flex: none; font-size: 14.2px; }
  .dock { display: flex; gap: 4px; }
  .dock svg { width: 14px; height: 14px; fill: none; stroke: #6b6b66; stroke-width: 1.2; }
  .ptools { display: flex; flex: none; align-items: center; }
  .a { height: 37px; padding: 0 0 3px 10px; gap: 11.3px; }
  .browser { height: 243px; flex: none; display: flex; border: 1px solid #b5b5b5; border-width: 1px 0 0 1px; background: #fff; }
  .list { width: 344px; overflow: hidden; }
  .row { height: 22.45px; display: flex; align-items: center; padding: 3px 0 0 67px; }
  .row.hot { background: #efefef; width: 227px; }
  .exp { width: 6px; height: 10px; margin: -4px 11px 0 0; }
  .ti { width: 20px; height: 18px; margin: -2px 7.5px 0 0; }
  .sap { padding-left: 24px; }
  .scroll { width: 18px; border-left: 1px solid #c0c0c0; display: flex; flex-direction: column; }
  .sb { height: 18px; display: flex; align-items: center; justify-content: center; padding-right: 2px; }
  .sb.up { height: 17px; border-bottom: 1px solid #c0c0c0; }
  .g1 { height: 101px; background: #e4e4e4; border-bottom: 1px solid #b5b5b5; }
  .thumb { height: 53px; background: linear-gradient(90deg, #fefefe, #ededed); }
  .g2 { height: 54px; background: #e4e4e4; border: 1px solid #c0c0c0; border-width: 1px 0; }
  .hsplit { height: 9px; display: flex; align-items: center; justify-content: center; flex: none; padding-left: 4px; }
  .hsplit i { width: 21px; height: 1px; background: repeating-linear-gradient(90deg, #b0b0b0 0 1px, transparent 1px 3px); }
  .w { height: 26px; padding-top: 0; }
  .b { height: 36px; padding: 0 0 3px 10px; gap: 11.3px; }
  .b .tri { margin: 0 0 0 -3px; }
  .layers { flex: 1; background: #fff; border: 1px solid #b5b5b5; border-right: 0; font-weight: 700; }
  .layer { height: 22.5px; display: flex; align-items: center; padding: 1px 0 0 29px; }
  .layer.hot { background: #efefef; height: 23px; }
  .off { color: #808080; font-style: italic; }
  .check { width: 18px; height: 18px; background: #fff; border: 1px solid #bcbcbc; flex: none; }
  .check svg { width: 16px; height: 16px; }
  .sw { width: 20px; height: 20px; margin: 0 8px 0 7px; border: 1px solid #333; }
  .red { background: #c43b39; }
  .brown { background: #a66f57; }
  .ln { width: 20px; height: 2px; margin: 0 8px 0 7px; background: #7ba577; }
  .flt { width: 20px; height: 20px; margin: 0 7px 0 auto; background: #f2f2f2; outline: 1px solid #ddd; }
  .vsplit { width: 8px; flex: none; display: flex; align-items: center; justify-content: center; }
  .vsplit i { width: 1px; height: 21px; background: repeating-linear-gradient(#b0b0b0 0 1px, transparent 1px 3px); }
  .right { width: 9px; }
  .map { width: 1168px; flex: none; background: #fff; border: 1px solid #b5b5b5; border-width: 1px 0 1px 1px; border-top-color: #efefef; }

  .rside { width: 372px; flex: none; display: flex; flex-direction: column; }
  .white { background: #fff; margin-left: 1px; flex: none; margin-right: 1px; }
  .w1 { height: 238px; border-bottom: 1px solid #b5b5b5; }
  .x { height: 7px; }
  .w2 { height: 228px; border-bottom: 1px solid #b5b5b5; }
  .y { height: 6px; }
  .q { height: 26px; padding-top: 2px; }
  .field { background: #fff; border: 1px solid #a9a9a9; border-radius: 3px; display: flex; align-items: center; flex: none; }
  .qms { height: 27px; color: #808080; font-size: 12.5px; padding-left: 2px; }
  .qbtns { display: flex; justify-content: flex-end; gap: 8px; padding-top: 8px; height: 44px; font-size: 12.5px; }
  .btn { height: 26px; width: 100px; border: 1px solid #a5a5a5; border-radius: 3px; background: linear-gradient(#fcfcfc, #eee); display: flex; align-items: center; justify-content: center; padding-top: 1px; }
  .combo { width: 81px; height: 27px; justify-content: space-between; padding: 0 9px 0 5px; }
  .w3 { height: 179px; }
  .fresh { height: 41px; margin: 6px 1px 0 0; border: 1px solid #b5b5b5; border-left: 0; border-bottom-width: 2px; display: flex; padding: 8px 0 0 91px; align-items: center; font-size: 12.5px; gap: 4px; flex: none; }
  .fresh svg { width: 13px; height: 15px; margin: -6px 3px 0 0; }
  .lnk { color: #00f; text-decoration: underline; text-underline-offset: 2px; }

  .status { height: 35px; flex: none; display: flex; align-items: center; font-size: 13.3px; }
  .status > * { flex: none; }
  .find { width: 250px; height: 27px; margin: 1px 0 0 5px; color: #808080; font-size: 12.5px; padding-left: 10px; gap: 9px; }
  .find svg { width: 16px; height: 16px; }
  .s-coord { margin-left: 641px; width: 83px; }
  .coord { width: 129px; height: 27px; justify-content: center; }
  .ext { width: 20px; height: 20px; margin-left: 6px; }
  .s-scale { margin-left: 16px; width: 36px; margin-top: -1px; }
  .scalef { width: 95px; height: 27px; overflow: hidden; justify-content: space-between; }
  .cbtn { width: 25px; height: 100%; border-left: 1px solid #a9a9a9; background: linear-gradient(#fcfcfc, #eee); display: flex; align-items: center; justify-content: center; }
  .lock { width: 16px; height: 20px; margin-left: 16px; }
  .s-mag { margin-left: 11px; width: 84px; }
  .spinf { width: 101px; height: 25px; justify-content: space-between; padding-left: 5px; }
  .spin { width: 19px; height: 100%; border-left: 1px solid #b5b5b5; display: flex; flex-direction: column; gap: 4px; align-items: center; justify-content: center; background: #f7f7f7; }
  .s-rot { margin-left: 11px; width: 46px; }
  .s-chk { margin-left: 8px; }
  .s-ren { margin-left: 6px; width: 75px; margin-top: -1px; }
  .globe { width: 20px; height: 18px; }
  .s-eps { margin-left: 2px; width: 95px; }
  .msg { width: 20px; height: 19px; }

  .task { height: 60px; flex: none; background: #202529; border-top: 1px solid #3c4044; display: flex; align-items: center; color: #fff; font-size: 14px; }
  .wx { width: 30px; height: 30px; margin-left: 25px; }
  .wtext { margin-left: 9px; width: 548px; display: flex; flex-direction: column; align-items: flex-start; color: #c9ccce; line-height: 20px; flex: none; }
  .wtext b { font-weight: 400; color: #fff; }
  .win { width: 29px; height: 29px; display: grid; grid-template-columns: 14px 14px; grid-template-rows: 14px 14px; gap: 1px; flex: none; }
  .win i { background: linear-gradient(135deg, #79d8fb, #38bdf5); }
  .win i:nth-child(4) { background: linear-gradient(135deg, #3fc0fa, #149cf5); }
  .pill { width: 275px; height: 40px; margin-left: 17px; border-radius: 20px; background: #404347; border: 1px solid #55585c; border-top-color: #686b6f; display: flex; align-items: center; padding: 0 7px 0 14px; color: #cfd0d1; font-size: 15.5px; flex: none; }
  .pill svg { width: 18px; height: 18px; margin-right: 13px; }
  .pill .bing { width: 26px; height: 26px; margin: 0 0 0 auto; }
  .apps { display: flex; margin-left: 2px; flex: none; }
  .app1 { width: 55.1px; height: 60px; position: relative; display: flex; align-items: center; justify-content: center; flex: none; }
  .app1 svg { width: 40px; height: 40px; position: relative; }
  .app1 > i { position: absolute; bottom: 6px; width: 0; height: 4px; border-radius: 2px; background: #9a9da0; }
  .open > i { width: 8px; }
  .active > i { width: 19px; background: #9fb1b8; }
  .active::before { content: ''; position: absolute; inset: 4.5px 3px 5.5px; border-radius: 5px; background: #2d3236; border: 1px solid #373c40; }
  .chev { width: 14px; height: 8px; margin-left: 335px; }
  .tray { width: 83.3px; height: 25px; margin-left: 22px; }
  .clock { width: 91px; display: flex; flex-direction: column; align-items: flex-end; line-height: 20px; flex: none; }
  .note { width: 20px; height: 20px; border-radius: 50%; background: #9daab0; color: #1e2427; font-size: 11px; text-align: center; margin-left: 9px; flex: none; }
</style>
